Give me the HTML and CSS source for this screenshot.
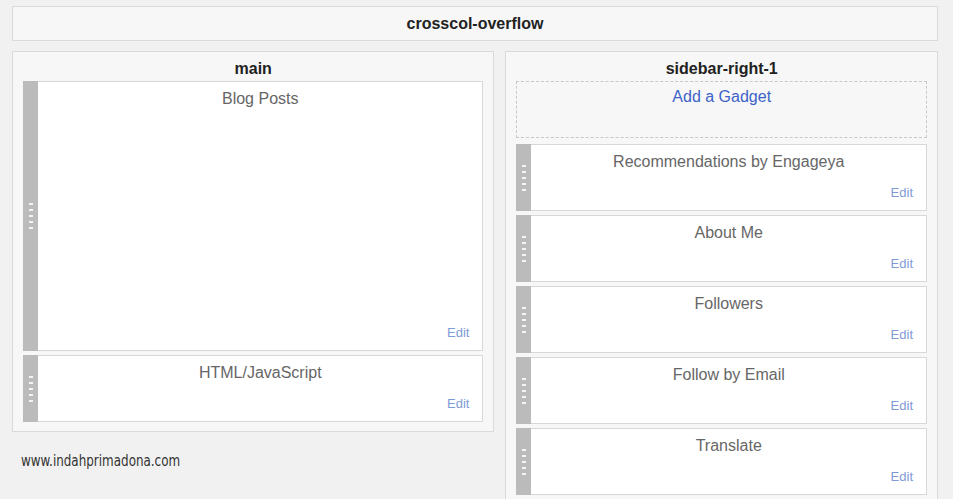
FILE: index.html
```html
<!doctype HTML>
<html>
  <head>
    <title>Layout</title>
    <link rel="stylesheet" href="styles.css">
  </head>
  <body>
    <div class="section crosscol">
      <h2 class="section-title">crosscol-overflow</h2>
    </div>
    <div class="columns">
      <div class="column-left">
        <div class="section main">
          <h2 class="section-title">main</h2>
          <div class="widget widget-tall">
            <div class="grip"><span class="dots"></span></div>
            <div class="widget-body">
              <div class="widget-title">Blog Posts</div>
              <a class="edit">Edit</a>
            </div>
          </div>
          <div class="widget">
            <div class="grip"><span class="dots"></span></div>
            <div class="widget-body">
              <div class="widget-title">HTML/JavaScript</div>
              <a class="edit">Edit</a>
            </div>
          </div>
        </div>
        <div class="watermark"><span>www.indahprimadona.com</span></div>
      </div>
      <div class="section sidebar">
        <h2 class="section-title">sidebar-right-1</h2>
        <div class="add-gadget"><a>Add a Gadget</a></div>
        <div class="widget">
          <div class="grip"><span class="dots"></span></div>
          <div class="widget-body">
            <div class="widget-title">Recommendations by Engageya</div>
            <a class="edit">Edit</a>
          </div>
        </div>
        <div class="widget">
          <div class="grip"><span class="dots"></span></div>
          <div class="widget-body">
            <div class="widget-title">About Me</div>
            <a class="edit">Edit</a>
          </div>
        </div>
        <div class="widget">
          <div class="grip"><span class="dots"></span></div>
          <div class="widget-body">
            <div class="widget-title">Followers</div>
            <a class="edit">Edit</a>
          </div>
        </div>
        <div class="widget">
          <div class="grip"><span class="dots"></span></div>
          <div class="widget-body">
            <div class="widget-title">Follow by Email</div>
            <a class="edit">Edit</a>
          </div>
        </div>
        <div class="widget">
          <div class="grip"><span class="dots"></span></div>
          <div class="widget-body">
            <div class="widget-title">Translate</div>
            <a class="edit">Edit</a>
          </div>
        </div>
      </div>
    </div>
  </body>
</html>
```

FILE: styles.css
```css
body {
  margin: 0;
  padding: 6px 15px 0 12px;
  width: 953px;
  height: 499px;
  box-sizing: border-box;
  background-color: #f1f1f1;
  font-family: 'Liberation Sans', Arial, sans-serif;
  overflow: hidden;
}
.section {
  box-sizing: border-box;
  background-color: #f7f7f7;
  border: 1px solid #dadada;
}
.section-title {
  margin: 0;
  font-size: 16px;
  font-weight: bold;
  line-height: 20px;
  text-align: center;
  color: #222;
}
.crosscol {
  height: 35px;
}
.crosscol .section-title {
  padding-top: 7px;
}
.columns {
  display: flex;
  gap: 11px;
  margin-top: 10px;
}
.column-left {
  width: 483px;
  display: flex;
  flex-direction: column;
}
.main {
  padding: 0 10px 9px;
}
.sidebar {
  width: 433px;
  padding: 0 10px 9px;
}
.main .section-title,
.sidebar .section-title {
  padding-top: 7px;
  margin-bottom: 2px;
}

/* widgets */
.widget {
  display: flex;
  box-sizing: border-box;
  height: 67px;
  margin-top: 4px;
  background-color: white;
  border: 1px solid #d8d8d8;
}
.section-title + .widget {
  margin-top: 0;
}
.widget-tall {
  height: 270px;
}
.grip {
  width: 15px;
  margin: -1px 0 -1px -1px;
  background-color: #bbb;
  display: flex;
  align-items: center;
  justify-content: center;
}
.dots {
  width: 4px;
  height: 26px;
  background: repeating-linear-gradient(#f4f4f4 0 2px, transparent 2px 6px);
}
.widget-body {
  flex: 1;
  display: flex;
  flex-direction: column;
  justify-content: space-between;
  padding: 8px 13px 9px;
}
.widget-title {
  text-align: center;
  font-size: 16px;
  line-height: 18px;
  color: #666;
}
.edit {
  align-self: flex-end;
  font-size: 13px;
  line-height: 16px;
  color: #7f9bd6;
}

.add-gadget {
  box-sizing: border-box;
  height: 57px;
  margin-bottom: 6px;
  border: 1px dashed #c8c8c8;
  padding-top: 6px;
  text-align: center;
  font-size: 16px;
  line-height: 18px;
}
.add-gadget a {
  color: #3d63c9;
}
.add-gadget + .widget {
  margin-top: 0;
}

.watermark {
  margin-top: 19px;
  padding-left: 9px;
  font-family: 'DejaVu Sans Condensed', sans-serif;
  font-size: 16px;
  color: #333;
}
.watermark span {
  display: inline-block;
  transform: scaleX(0.83);
  transform-origin: left center;
}
```
